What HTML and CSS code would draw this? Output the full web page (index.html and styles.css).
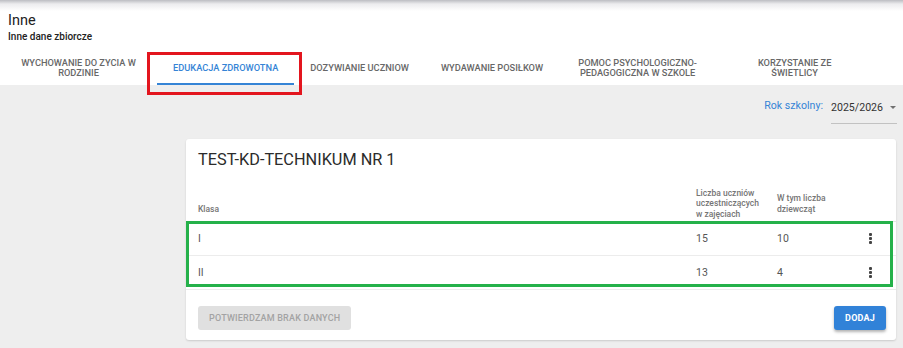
FILE: index.html
```html
<!DOCTYPE html>
<html lang="pl">
<head>
    <meta charset="UTF-8">
    <meta name="viewport" content="width=device-width, initial-scale=1.0">
    <title>Inne</title>
    <link rel="stylesheet" href="styles.css">
</head>
<body>

    <header class="head">
        <h1>Inne</h1>
        <p class="subtitle">Inne dane zbiorcze</p>
        <nav class="tabs">
            <div class="tab"><span class="tab-label">Wychowanie do zycia w rodzinie</span></div>
            <div class="tab active">
                <span class="tab-label">Edukacja zdrowotna</span>
                <div class="mark-red"></div>
            </div>
            <div class="tab"><span class="tab-label">Dozywianie uczniow</span></div>
            <div class="tab"><span class="tab-label">Wydawanie posiłkow</span></div>
            <div class="tab"><span class="tab-label">Pomoc psychologiczno-pedagogiczna w szkole</span></div>
            <div class="tab"><span class="tab-label wide">Korzystanie ze<br>świetlicy</span></div>
        </nav>
    </header>

    <main class="content">
        <div class="year-row">
            <span class="year-label">Rok szkolny:</span>
            <div class="select">
                <span>2025/2026</span>
                <span class="caret"></span>
            </div>
        </div>

        <div class="layout">
            <aside class="side"></aside>

            <section class="card">
                <h2 class="card-title">TEST-KD-TECHNIKUM NR 1</h2>

                <div class="thead">
                    <div>Klasa</div>
                    <div class="clip">Liczba uczniów uczestniczących w zajęciach</div>
                    <div>W tym liczba dziewcząt</div>
                    <div></div>
                </div>

                <div class="tbody">
                    <div class="row">
                        <div>I</div>
                        <div>15</div>
                        <div>10</div>
                        <div class="more"><i></i><i></i><i></i></div>
                    </div>
                    <div class="row">
                        <div>II</div>
                        <div>13</div>
                        <div>4</div>
                        <div class="more"><i></i><i></i><i></i></div>
                    </div>
                    <div class="mark-green"></div>
                </div>

                <div class="card-actions">
                    <button class="btn btn-flat">Potwierdzam brak danych</button>
                    <button class="btn btn-primary">Dodaj</button>
                </div>
            </section>
        </div>
    </main>

</body>
</html>
```

FILE: styles.css
```css
body {
    margin: 0;
    font-family: Roboto, "Noto Sans", sans-serif;
    background: #eeeeee;
    color: #333;
    height: 348px;
    overflow: hidden;
}

/* Header with title and tabs */
.head {
    background: linear-gradient(#bcbdc2 0, #ececee 4px, #fff 11px);
    padding-top: 12px;
}
.head h1 {
    margin: 0 0 0 8px;
    font-size: 14.5px;
    font-weight: 400;
    line-height: 18px;
    color: #212121;
}
.subtitle {
    margin: 0 0 0 8px;
    font-size: 10px;
    font-weight: 500;
    line-height: 14px;
    color: #222;
}
.tabs {
    display: flex;
    margin-top: 7px;
    height: 34px;
}
.tab {
    position: relative;
    display: flex;
    align-items: center;
    justify-content: center;
    padding: 0 16px;
    font-size: 9.25px;
    font-weight: 500;
    line-height: 10px;
    text-transform: uppercase;
    color: #676767;
}
.tab-label {
    max-width: 125px;
    text-align: center;
}
.tab-label.wide {
    width: 125px;
}
.tab.active {
    color: #3584d6;
    box-shadow: inset 0 -2px 0 #3584d6;
}

/* annotation boxes */
.mark-red {
    position: absolute;
    left: -10px;
    right: -8px;
    top: 1px;
    bottom: -10px;
    border: 3px solid #e3151e;
}
.mark-green {
    position: absolute;
    left: 0;
    right: 3px;
    top: -1px;
    bottom: 3px;
    border: 3px solid #25b14a;
}

/* Year selector */
.year-row {
    display: flex;
    justify-content: flex-end;
    align-items: flex-start;
    padding: 11px 6px 0 0;
    margin-bottom: 15px;
}
.year-label {
    font-size: 10.6px;
    line-height: 14px;
    padding-top: 3px;
    margin-right: 8px;
    color: #3584d6;
}
.select {
    display: flex;
    justify-content: space-between;
    align-items: center;
    width: 66px;
    height: 17px;
    padding: 3px 0 7px;
    font-size: 10.6px;
    line-height: 14px;
    color: #333;
    border-bottom: 1px solid #c2c2c2;
}
.caret {
    width: 0;
    height: 0;
    margin-right: 1px;
    border-left: 3.5px solid transparent;
    border-right: 3.5px solid transparent;
    border-top: 3.5px solid #707070;
}

/* Card */
.layout {
    display: grid;
    grid-template-columns: 186px 1fr;
    padding-right: 7px;
}
.card {
    background: #fff;
    border-radius: 3px;
    box-shadow: 0 1px 2px rgba(0, 0, 0, 0.15);
    padding-top: 10px;
}
.card-title {
    margin: 0 12px;
    font-size: 16.3px;
    font-weight: 400;
    line-height: 22px;
    color: #2b2b2b;
}

.thead, .row {
    display: grid;
    grid-template-columns: 1fr 81px 80px 27px;
    padding: 0 12px;
}
.thead {
    margin-top: 12px;
    height: 31px;
    padding-bottom: 7px;
    align-items: end;
    overflow: hidden;
    font-size: 8.5px;
    font-weight: 500;
    line-height: 10.5px;
    color: #757575;
    border-bottom: 1px solid #e6e6e6;
}
.thead > div {
    padding-right: 12px;
}
.thead .clip {
    margin-bottom: -5px;
}

.tbody {
    position: relative;
}
.row {
    height: 33px;
    align-items: center;
    font-size: 10.5px;
    color: #555;
    border-bottom: 1px solid #ececec;
}
.more {
    display: flex;
    flex-direction: column;
    align-items: center;
    gap: 1.5px;
}
.more i {
    width: 2.5px;
    height: 2.5px;
    background: #444;
    border-radius: 1px;
}

.card-actions {
    display: flex;
    justify-content: space-between;
    padding: 16px 10px 10px 12px;
}
.btn {
    height: 24px;
    padding: 0 11px;
    border: none;
    border-radius: 3px;
    font-family: Roboto, sans-serif;
    font-size: 9px;
    font-weight: 500;
    text-transform: uppercase;
    letter-spacing: 0.2px;
}
.btn-flat {
    background: #e0e0e0;
    color: #a3a3a3;
}
.btn-primary {
    background: #3182d8;
    color: #fff;
    font-weight: 700;
    box-shadow: 0 2px 3px rgba(0, 0, 0, 0.3);
}
```
